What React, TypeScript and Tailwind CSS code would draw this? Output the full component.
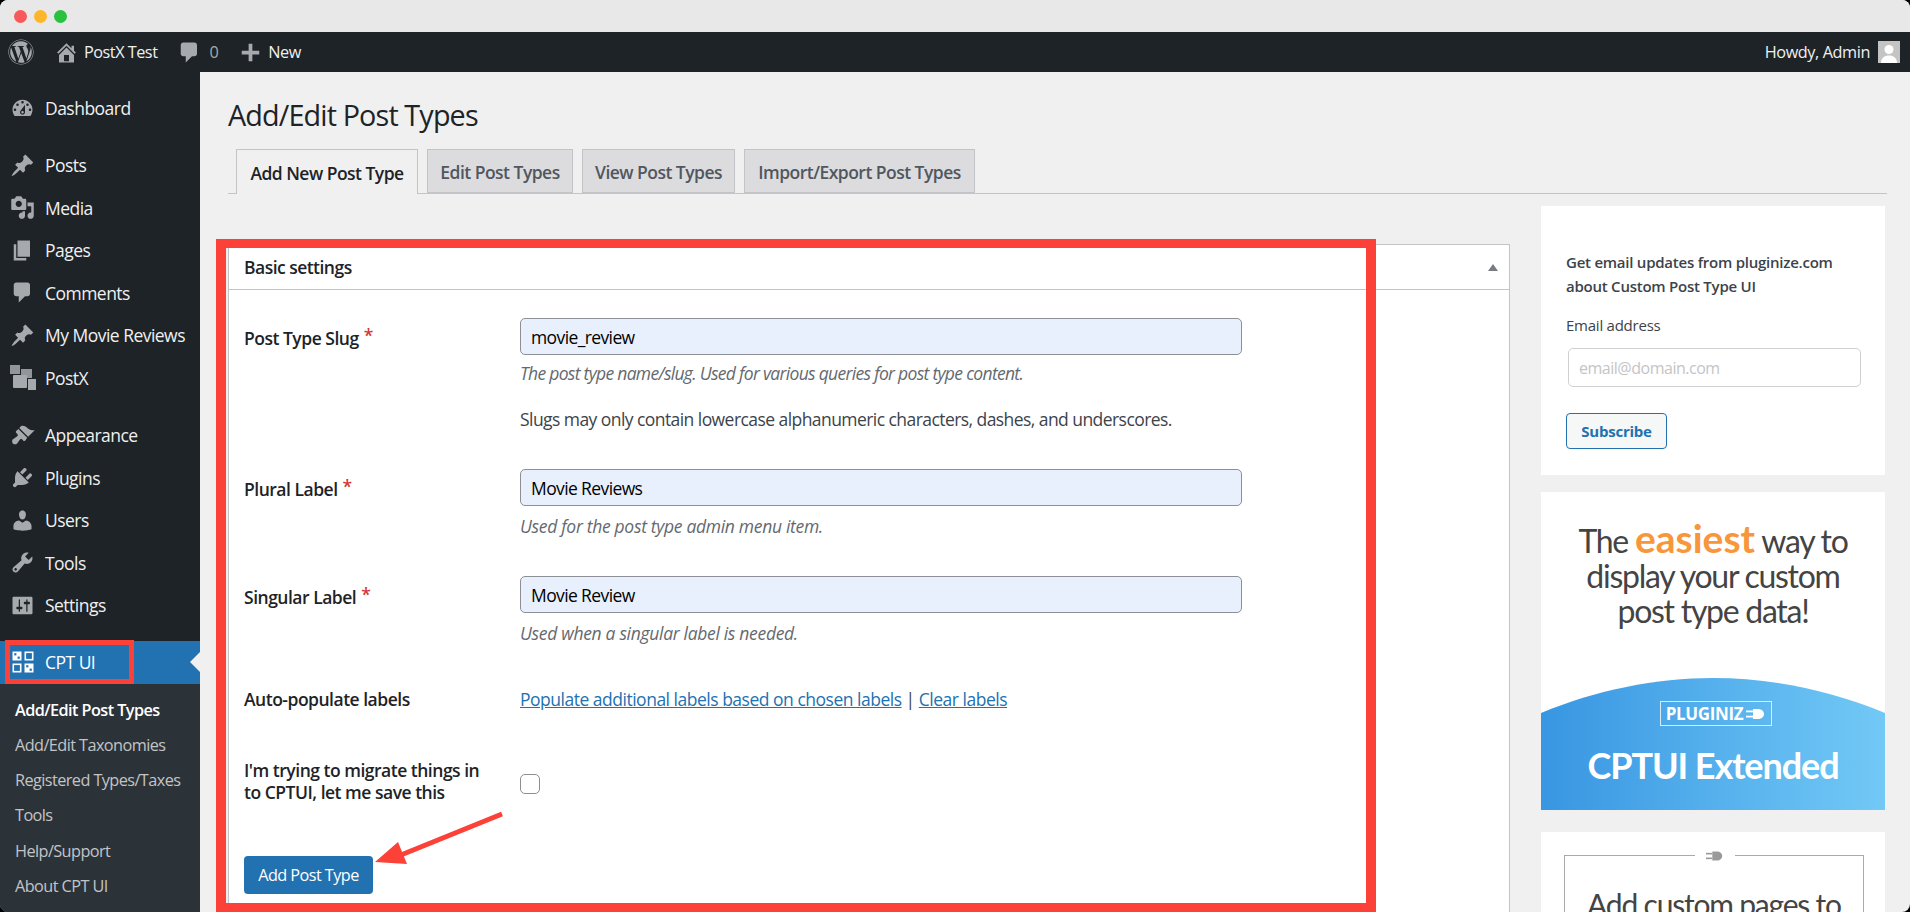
import React from "react";
import { FaWordpress } from "react-icons/fa";

const P: Record<string, string> = {
  dashboard: "M3.76 16h12.48c1.1-1.37 1.76-3.11 1.76-5 0-4.42-3.58-8-8-8s-8 3.58-8 8c0 1.89.66 3.63 1.76 5zM10 4c.55 0 1 .45 1 1s-.45 1-1 1-1-.45-1-1 .45-1 1-1zM6 6c.55 0 1 .45 1 1s-.45 1-1 1-1-.45-1-1 .45-1 1-1zm8 0c.55 0 1 .45 1 1s-.45 1-1 1-1-.45-1-1 .45-1 1-1zm-5.37 5.55L12 7v6c0 1.1-.9 2-2 2s-2-.9-2-2c0-.57.24-1.08.63-1.45zM4 10c.55 0 1 .45 1 1s-.45 1-1 1-1-.45-1-1 .45-1 1-1zm12 0c.55 0 1 .45 1 1s-.45 1-1 1-1-.45-1-1 .45-1 1-1zm-5 3c0-.55-.45-1-1-1s-1 .45-1 1 .45 1 1 1 1-.45 1-1z",
  pin: "M10.44 3.02l1.82-1.82 6.36 6.35-1.83 1.82c-1.05-.68-2.48-.57-3.41.36l-.75.75c-.92.93-1.04 2.35-.35 3.41l-1.83 1.82-2.41-2.41-2.8 2.79c-.42.42-3.38 2.71-3.8 2.29s1.86-3.39 2.28-3.81l2.79-2.79L4.1 9.36l1.83-1.82c1.05.69 2.48.57 3.4-.36l.75-.75c.93-.92 1.05-2.35.36-3.41z",
  media: "M13 11V4c0-.55-.45-1-1-1h-1.67L9 1H5L3.67 3H2c-.55 0-1 .45-1 1v7c0 .55.45 1 1 1h10c.55 0 1-.45 1-1zM7 4.5c1.38 0 2.5 1.12 2.5 2.5S8.38 9.5 7 9.5 4.5 8.38 4.5 7 5.62 4.5 7 4.5zM14 6h5v10.5c0 1.38-1.12 2.5-2.5 2.5S14 17.88 14 16.5s1.12-2.5 2.5-2.5c.17 0 .34.02.5.05V9h-3V6zm-4 8.05V13h2v3.5c0 1.38-1.12 2.5-2.5 2.5S7 17.88 7 16.5 8.12 14 9.5 14c.17 0 .34.02.5.05z",
  page: "M6 15V2h10v13H6zm-1 1h8v2H3V5h2v11z",
  comment: "M5 2h9c1.1 0 2 .9 2 2v7c0 1.1-.9 2-2 2h-2l-5 5v-5H5c-1.1 0-2-.9-2-2V4c0-1.1.9-2 2-2z",
  brush: "M14.48 11.06L7.41 3.99l1.5-1.5c.5-.56 2.3-.47 3.51.32 1.21.8 1.43 1.28 2.91 2.1 1.18.64 2.45 1.26 4.45.85zm-.71.71L6.7 4.7 4.93 6.47c-.39.39-.39 1.02 0 1.41l1.06 1.06c.39.39.39 1.03 0 1.42-.6.6-1.43 1.11-2.21 1.69-.35.26-.7.53-1.01.84C1.43 13.23 1.5 15 2 16s2.5 1.5 3.7.3c.31-.31.58-.66.84-1.01.58-.78 1.09-1.61 1.69-2.21.39-.39 1.02-.39 1.41 0l1.06 1.06c.39.39 1.02.39 1.41 0z",
  plug: "M13.11 4.36L9.87 7.6 8 5.73l3.24-3.24c.35-.34 1.05-.2 1.56.32.52.51.66 1.21.31 1.55zm-8 1.77l.91-1.12 9.01 9.01-1.19.84c-.71.71-2.63 1.16-3.82 1.16H6.14L4.9 17.26c-.59.59-1.54.59-2.12 0-.59-.58-.59-1.53 0-2.12l1.24-1.24v-3.88c0-1.13.4-3.19 1.09-3.89zm7.26 3.97l3.24-3.24c.34-.35 1.04-.21 1.55.31.52.51.66 1.21.31 1.55l-3.24 3.25z",
  users: "M10 9.25c-2.27 0-2.73-3.44-2.73-3.44C7 4.02 7.82 2 9.97 2c2.16 0 2.98 2.02 2.71 3.81 0 0-.41 3.44-2.68 3.44zm0 2.57L12.72 10c2.39 0 4.52 2.33 4.52 4.53v2.49s-3.65 1.13-7.24 1.13c-3.65 0-7.24-1.13-7.24-1.13v-2.49c0-2.25 1.94-4.48 4.47-4.48z",
  tools: "M16.68 9.77c-1.34 1.34-3.3 1.67-4.95.99l-5.41 6.52c-.99.99-2.59.99-3.58 0s-.99-2.59 0-3.57l6.52-5.42c-.68-1.65-.35-3.61.99-4.95 1.28-1.28 3.12-1.62 4.72-1.06l-2.89 2.89 2.82 2.82 2.86-2.87c.53 1.58.18 3.39-1.08 4.65zM3.81 16.21c.4.39 1.04.39 1.43 0 .4-.4.4-1.04 0-1.43-.39-.4-1.03-.4-1.43 0-.39.39-.39 1.03 0 1.43z",
  settings: "M18 16V4c0-.55-.45-1-1-1H3c-.55 0-1 .45-1 1v12c0 .55.45 1 1 1h14c.55 0 1-.45 1-1zM8 11h1c.55 0 1 .45 1 1s-.45 1-1 1H8v1.5c0 .28-.22.5-.5.5s-.5-.22-.5-.5V13H6c-.55 0-1-.45-1-1s.45-1 1-1h1V5.5c0-.28.22-.5.5-.5s.5.22.5.5V11zm5-2h-1c-.55 0-1-.45-1-1s.45-1 1-1h1V5.5c0-.28.22-.5.5-.5s.5.22.5.5V7h1c.55 0 1 .45 1 1s-.45 1-1 1h-1v5.5c0 .28-.22.5-.5.5s-.5-.22-.5-.5V9z",
  home: "M16 8.5l1.53 1.53-1.06 1.06L10 4.62l-6.47 6.47-1.06-1.06L10 2.5l4 4v-2h2v4zm-6-2.46l6 5.99V18H4v-5.97zM12 17v-5H8v5h4z",
  plus: "M17 8.5v3h-5.5V17h-3v-5.5H3v-3h5.5V3h3v5.5z",
};

function Dash({ name, className }: { name: string; className: string }) {
  return (
    <svg viewBox="0 0 20 20" className={className} fill="currentColor" aria-hidden="true">
      <path d={P[name]} />
    </svg>
  );
}

function PostXIcon() {
  return (
    <svg viewBox="0 0 26 26" className="h-[26px] w-[26px]" fill="currentColor" aria-hidden="true">
      <rect x="0" y="0" width="10" height="9" opacity="0.85" />
      <rect x="11" y="4" width="11" height="9" opacity="0.85" />
      <rect x="3" y="10" width="14" height="13" rx="1" />
      <rect x="18" y="14" width="8" height="11" />
    </svg>
  );
}

function CptIcon() {
  return (
    <svg viewBox="0 0 22 22" className="h-[22px] w-[22px]" aria-hidden="true">
      <g fill="#fff">
        <rect x="0.5" y="0.5" width="9" height="9" />
        <rect x="12.5" y="12.5" width="9" height="9" />
      </g>
      <g fill="none" stroke="#fff" strokeWidth="1.6">
        <rect x="13.3" y="1.3" width="7.4" height="7.4" />
        <rect x="1.3" y="13.3" width="7.4" height="7.4" />
      </g>
      <g fill="#2271b1">
        <rect x="2.2" y="2.2" width="2.2" height="2.2" />
        <rect x="5.6" y="5.6" width="2.2" height="2.2" />
        <rect x="14.2" y="14.2" width="2.2" height="2.2" />
        <rect x="17.6" y="17.6" width="2.2" height="2.2" />
      </g>
    </svg>
  );
}

function PlugMark({ className }: { className: string }) {
  return (
    <svg viewBox="0 0 20 12" className={className} fill="currentColor" aria-hidden="true">
      <rect x="0" y="2.5" width="7" height="1.8" />
      <rect x="0" y="7.7" width="7" height="1.8" />
      <path d="M7 1h5c3.5 0 6 2.2 6 5s-2.5 5-6 5H7z" />
    </svg>
  );
}

const top1: [string, string][] = [["pin", "Posts"], ["media", "Media"], ["page", "Pages"], ["comment", "Comments"], ["pin", "My Movie Reviews"], ["postx", "PostX"]];
const top2: [string, string][] = [["brush", "Appearance"], ["plug", "Plugins"], ["users", "Users"], ["tools", "Tools"], ["settings", "Settings"]];
const subs = ["Add/Edit Taxonomies", "Registered Types/Taxes", "Tools", "Help/Support", "About CPT UI"];

function MenuItem({ icon, label }: { icon: string; label: string }) {
  return (
    <div className="flex h-[42.5px] items-center text-[#f0f0f1]">
      <div className="flex w-[45px] shrink-0 justify-center text-[#a7aaad]">
        {icon === "postx" ? <PostXIcon /> : <Dash name={icon} className="h-[25px] w-[25px]" />}
      </div>
      <span className="whitespace-nowrap text-[17.5px] tracking-[-0.03em]">{label}</span>
    </div>
  );
}

function Tab({ label, active, w }: { label: string; active?: boolean; w: string }) {
  return active ? (
    <div className={`${w} -mb-px flex h-[45px] items-center justify-center border border-b-0 border-[#c3c4c7] bg-[#f0f0f1] pt-[2px] text-[17.5px] font-semibold tracking-[-0.03em] text-[#1d2327]`}>{label}</div>
  ) : (
    <div className={`${w} flex h-[44px] items-center justify-center border border-[#c3c4c7] bg-[#dcdcde] pt-[2px] text-[17.5px] font-semibold tracking-[-0.03em] text-[#50575e]`}>{label}</div>
  );
}

function Label({ text, req }: { text: React.ReactNode; req?: boolean }) {
  return (
    <div className="w-[276px] shrink-0 text-[17.5px] font-semibold leading-[22px] tracking-[-0.028em] text-[#1d2327]">
      {text}
      {req && <span className="ml-[5px] align-[3px] text-[#d63638]">*</span>}
    </div>
  );
}

function Field({ value }: { value: string }) {
  return (
    <input
      readOnly
      value={value}
      className="block h-[37px] w-[722px] rounded-[5px] border border-[#8c8f94] bg-[#e8f0fe] px-[10px] text-[17.5px] tracking-[-0.035em] text-black outline-none"
    />
  );
}

const desc = "text-[17.5px] italic leading-[22px] text-[#646970]";
const ad = "font-['Lato','Open_Sans',sans-serif]";

export default function App() {
  return (
    <div className="h-[912px] w-full overflow-hidden bg-black font-['Open_Sans','Noto_Sans',sans-serif]">
      <div className="relative h-full overflow-hidden rounded-[8px] bg-[#f0f0f1]">
        {/* window chrome */}
        <div className="flex h-[32px] items-center gap-[7px] bg-[#e8e8e8] pl-[13.5px]">
          <span className="h-[13px] w-[13px] rounded-full bg-[#f6595b]" />
          <span className="h-[13px] w-[13px] rounded-full bg-[#fdb52c]" />
          <span className="h-[13px] w-[13px] rounded-full bg-[#2bc140]" />
        </div>

        {/* admin bar */}
        <div className="flex h-[40px] items-center bg-[#1d2327] pr-[10px] text-[16.25px] tracking-[-0.03em] text-[#f0f0f1]">
          <div className="flex w-[42px] justify-center text-[#a7aaad]"><FaWordpress className="h-[26px] w-[26px]" /></div>
          <Dash name="home" className="ml-[12px] h-[25px] w-[25px] text-[#a7aaad]" />
          <span className="ml-[5px]">PostX Test</span>
          <Dash name="comment" className="ml-[20px] h-[25px] w-[25px] text-[#a7aaad]" />
          <span className="ml-[7px] text-[#a7aaad]">0</span>
          <Dash name="plus" className="ml-[20px] h-[25px] w-[25px] text-[#a7aaad]" />
          <span className="ml-[5px]">New</span>
          <span className="ml-auto tracking-[-0.025em]">Howdy, Admin</span>
          <div className="ml-[8px] h-[22px] w-[22px] overflow-hidden bg-[#c4c4c4]">
            <svg viewBox="0 0 22 22" className="h-full w-full" fill="#fff" aria-hidden="true">
              <circle cx="11" cy="8.5" r="4.5" />
              <path d="M3 22c0-5 3.5-7.5 8-7.5s8 2.5 8 7.5z" />
            </svg>
          </div>
        </div>

        <div className="flex h-[840px]">
          {/* sidebar */}
          <aside className="flex w-[200px] shrink-0 flex-col bg-[#1d2327] pt-[15px]">
            <MenuItem icon="dashboard" label="Dashboard" />
            <div className="h-[14.5px]" />
            {top1.map(([i, l]) => <MenuItem key={l} icon={i} label={l} />)}
            <div className="h-[15px]" />
            {top2.map(([i, l]) => <MenuItem key={l} icon={i} label={l} />)}
            <div className="h-[14.5px]" />
            <div className="relative flex h-[42.5px] items-center bg-[#2271b1] text-white">
              <div className="flex w-[45px] shrink-0 justify-center"><CptIcon /></div>
              <span className="text-[17.5px] tracking-[-0.03em]">CPT UI</span>
              <span className="absolute right-0 top-1/2 h-0 w-0 -translate-y-1/2 border-y-[10px] border-r-[10px] border-y-transparent border-r-[#f0f0f1]" />
              <span className="absolute left-[5px] top-[-1px] h-[44px] w-[129px] border-[5px] border-[#fb4138]" />
            </div>
            <div className="flex-1 bg-[#2c3338] pl-[15px] pt-[9px] text-[16.25px] tracking-[-0.035em] text-[#c3c4c7]">
              <div className="flex h-[35.2px] items-center font-semibold text-white">Add/Edit Post Types</div>
              {subs.map((s) => <div key={s} className="flex h-[35.2px] items-center">{s}</div>)}
            </div>
          </aside>

          {/* content */}
          <main className="relative min-w-0 flex-1 pl-[28px] pr-[23px]">
            <h1 className="pt-[24px] text-[28.75px] font-normal leading-[38px] tracking-[-0.03em] text-[#1d2327]">Add/Edit Post Types</h1>
            <div className="mt-[15px] flex h-[45px] gap-[9px] border-b border-[#c3c4c7] pl-[8px]">
              <Tab label="Add New Post Type" active w="w-[182px]" />
              <Tab label="Edit Post Types" w="w-[146px]" />
              <Tab label="View Post Types" w="w-[153px]" />
              <Tab label="Import/Export Post Types" w="w-[231px]" />
            </div>

            <div className="flex">
              {/* postbox */}
              <section className="mt-[50px] h-[700px] w-[1282px] shrink-0 border border-[#c3c4c7] bg-white">
                <div className="flex h-[45px] items-center justify-between border-b border-[#c3c4c7] pl-[15px] pr-[11px]">
                  <span className="text-[17.5px] font-semibold tracking-[-0.03em] text-[#1d2327]">Basic settings</span>
                  <span className="h-0 w-0 border-x-[5.5px] border-b-[7px] border-x-transparent border-b-[#787c82]" />
                </div>
                <div className="pl-[15px]">
                  <div className="mt-[28px] flex">
                    <div className="pt-[6px]"><Label text="Post Type Slug" req /></div>
                    <div>
                      <Field value="movie_review" />
                      <p className={`mt-[7px] tracking-[-0.04em] ${desc}`}>The post type name/slug. Used for various queries for post type content.</p>
                      <p className="mt-[24px] text-[17.5px] leading-[22px] tracking-[-0.032em] text-[#3c434a]">Slugs may only contain lowercase alphanumeric characters, dashes, and underscores.</p>
                    </div>
                  </div>
                  <div className="mt-[39px] flex">
                    <div className="pt-[6px]"><Label text="Plural Label" req /></div>
                    <div>
                      <Field value="Movie Reviews" />
                      <p className={`mt-[9px] tracking-[-0.018em] ${desc}`}>Used for the post type admin menu item.</p>
                    </div>
                  </div>
                  <div className="mt-[39px] flex">
                    <div className="pt-[7px]"><Label text="Singular Label" req /></div>
                    <div>
                      <Field value="Movie Review" />
                      <p className={`mt-[9px] tracking-[-0.018em] ${desc}`}>Used when a singular label is needed.</p>
                    </div>
                  </div>
                  <div className="mt-[44px] flex items-center">
                    <Label text="Auto-populate labels" />
                    <div className="text-[17.5px] leading-[22px] tracking-[-0.028em] text-[#3c434a]">
                      <span className="text-[#2271b1] underline">Populate additional labels based on chosen labels</span> | <span className="text-[#2271b1] underline">Clear labels</span>
                    </div>
                  </div>
                  <div className="mt-[49px] flex items-center">
                    <Label text={<>I'm trying to migrate things in<br />to CPTUI, let me save this</>} />
                    <span className="mt-[6px] h-[20px] w-[20px] rounded-[5px] border border-[#8c8f94] bg-white" />
                  </div>
                  <div className="mt-[53px] flex h-[38px] w-[129px] items-center justify-center rounded-[4px] bg-[#2271b1] text-[16.25px] tracking-[-0.035em] text-white">Add Post Type</div>
                </div>
              </section>

              {/* right column */}
              <div className="ml-[31px] mt-[12px] flex w-[344px] shrink-0 flex-col gap-[17px]">
                <div className="h-[269px] bg-white pl-[25px] pt-[45px] tracking-[-0.015em]">
                  <p className="text-[15px] font-semibold leading-[23.5px] text-[#3c434a]">Get email updates from pluginize.com<br />about Custom Post Type UI</p>
                  <p className="mt-[15px] text-[15px] leading-[24px] text-[#3c434a]">Email address</p>
                  <input readOnly placeholder="email@domain.com" className="ml-[2px] mt-[11px] block h-[39px] w-[293px] rounded-[5px] border border-[#d0d0d2] bg-white px-[10px] text-[16px] tracking-[-0.03em] outline-none placeholder:text-[#c4c4c6]" />
                  <div className="mt-[26px] flex h-[36px] w-[101px] items-center justify-center rounded-[4px] border border-[#2271b1] bg-[#f6f7f7] text-[15px] font-bold text-[#2271b1]">Subscribe</div>
                </div>
                <div className="relative h-[318px] overflow-hidden bg-white">
                  <div className={`pt-[29px] text-center text-[32px] leading-[35.2px] tracking-[-0.04em] text-[#444] ${ad}`}>
                    The <span className="text-[39px] font-bold leading-[35px] tracking-normal text-[#f7963b]">easiest</span> way to<br />display your custom<br />post type data!
                  </div>
                  <svg viewBox="0 0 344 132" className="absolute bottom-0 left-0 h-[132px] w-[344px]" aria-hidden="true">
                    <defs>
                      <linearGradient id="adg" x1="0" x2="1" y1="0" y2="0">
                        <stop offset="0" stopColor="#3896e2" />
                        <stop offset="1" stopColor="#72c9f6" />
                      </linearGradient>
                    </defs>
                    <path d="M0 35C55 12 115 0 172 0s117 12 172 35v97H0z" fill="url(#adg)" />
                  </svg>
                  <div className="absolute bottom-0 left-0 flex h-[132px] w-[344px] flex-col items-center text-white">
                    <div className="ml-[6px] mt-[23px] flex h-[25px] w-[112px] items-center justify-center gap-[3px] border border-[#d5edfb] text-[17px] font-bold tracking-[-0.02em]">
                      PLUGINIZ<PlugMark className="h-[12px] w-[20px]" />
                    </div>
                    <div className={`mt-[17px] text-[36px] font-bold leading-[44px] tracking-[-0.03em] text-white ${ad}`}>CPTUI Extended</div>
                  </div>
                </div>
                <div className="mt-[5px] h-[100px] bg-white pl-[23px] pr-[21px] pt-[23px]">
                  <div className="relative h-[90px] border border-[#aaa] text-center">
                    <span className="absolute -top-[10px] left-[130px] flex h-[20px] w-[40px] items-center justify-center bg-white text-[#999]"><PlugMark className="h-[12px] w-[18px]" /></span>
                    <p className={`pt-[30px] text-[30px] leading-[36px] tracking-[-0.04em] text-[#444] ${ad}`}>Add custom pages to</p>
                  </div>
                </div>
              </div>
            </div>
          </main>
        </div>

        {/* annotation overlays */}
        <div className="absolute left-[216px] top-[239px] h-[673px] w-[1160px] border-x-[10px] border-y-[9.5px] border-[#fb4138]" />
        <svg viewBox="0 0 1910 912" className="pointer-events-none absolute inset-0 h-[912px] w-[1910px]" aria-hidden="true">
          <path d="M502 814L396 857" stroke="#fb4138" strokeWidth="5" fill="none" />
          <polygon points="375,862 398,842 407,864" fill="#fb4138" />
        </svg>
      </div>
    </div>
  );
}
